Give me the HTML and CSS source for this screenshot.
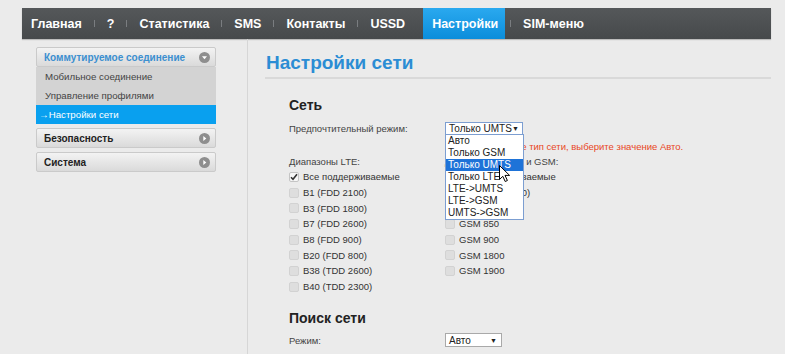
FILE: index.html
```html
<!DOCTYPE html>
<html lang="ru">
<head>
  <meta charset="UTF-8">
  <meta name="viewport" content="width=device-width, initial-scale=1.0">
  <title>Настройки сети</title>
  <link rel="stylesheet" href="styles.css">
</head>
<body>
  <div class="page">
    <!-- Top menu -->
    <nav class="topnav">
      <ul>
        <li><a href="#">Главная</a></li>
        <li><a href="#">?</a></li>
        <li><a href="#">Статистика</a></li>
        <li><a href="#">SMS</a></li>
        <li><a href="#">Контакты</a></li>
        <li><a href="#">USSD</a></li>
        <li class="active"><a href="#">Настройки</a></li>
        <li><a href="#">SIM-меню</a></li>
      </ul>
    </nav>

    <div class="main">
      <!-- Left menu -->
      <aside class="sidebar">
        <div class="menu-group">
          <div class="menu-head open">
            <span>Коммутируемое соединение</span>
            <svg class="toggle" width="11" height="11" viewBox="0 0 11 11"><circle cx="5.5" cy="5.5" r="5.5" fill="#8e8e8e"/><path d="M3 4.2h5L5.5 7.2z" fill="#fff"/></svg>
          </div>
          <ul class="submenu">
            <li><a href="#">Мобильное соединение</a></li>
            <li><a href="#">Управление профилями</a></li>
            <li class="current"><a href="#">&rarr;Настройки сети</a></li>
          </ul>
        </div>
        <div class="menu-group">
          <div class="menu-head">
            <span>Безопасность</span>
            <svg class="toggle" width="11" height="11" viewBox="0 0 11 11"><circle cx="5.5" cy="5.5" r="5.5" fill="#8e8e8e"/><path d="M4.3 3v5l3-2.5z" fill="#fff"/></svg>
          </div>
        </div>
        <div class="menu-group">
          <div class="menu-head">
            <span>Система</span>
            <svg class="toggle" width="11" height="11" viewBox="0 0 11 11"><circle cx="5.5" cy="5.5" r="5.5" fill="#8e8e8e"/><path d="M4.3 3v5l3-2.5z" fill="#fff"/></svg>
          </div>
        </div>
      </aside>

      <!-- Page content -->
      <section class="content">
        <h1>Настройки сети</h1>

        <div class="form-area">
          <h2>Сеть</h2>
          <div class="form-row">
            <span class="label">Предпочтительный режим:</span>
            <div class="select-wrap">
              <div class="select focused">Только UMTS <span class="arrow">&#9660;</span></div>
              <ul class="options">
                <li>Авто</li>
                <li>Только GSM</li>
                <li class="hover">Только UMTS</li>
                <li>Только LTE</li>
                <li>LTE-&gt;UMTS</li>
                <li>LTE-&gt;GSM</li>
                <li>UMTS-&gt;GSM</li>
              </ul>
              <svg class="cursor" width="11" height="17" viewBox="0 0 11 17"><path d="M0.5 0.5v14l3.3-3.2 2.4 5.2 2.2-1-2.4-5.1h4.6z" fill="#fff" stroke="#000" stroke-width="1"/></svg>
            </div>
          </div>
          <div class="hint">Если вы не знаете тип сети, выберите значение Авто.</div>

          <div class="bands">
            <div class="band-col">
              <div class="band-title">Диапазоны LTE:</div>
              <label class="check-row"><span class="box checked"><svg width="8" height="8" viewBox="0 0 8 8"><path d="M1 4.2l2 2L7 1.3" fill="none" stroke="#333" stroke-width="1.6"/></svg></span>Все поддерживаемые</label>
              <label class="check-row"><span class="box"></span>B1 (FDD 2100)</label>
              <label class="check-row"><span class="box"></span>B3 (FDD 1800)</label>
              <label class="check-row"><span class="box"></span>B7 (FDD 2600)</label>
              <label class="check-row"><span class="box"></span>B8 (FDD 900)</label>
              <label class="check-row"><span class="box"></span>B20 (FDD 800)</label>
              <label class="check-row"><span class="box"></span>B38 (TDD 2600)</label>
              <label class="check-row"><span class="box"></span>B40 (TDD 2300)</label>
            </div>
            <div class="band-col">
              <div class="band-title">Диапазоны UMTS и GSM:</div>
              <label class="check-row"><span class="box checked"><svg width="8" height="8" viewBox="0 0 8 8"><path d="M1 4.2l2 2L7 1.3" fill="none" stroke="#333" stroke-width="1.6"/></svg></span>Все поддерживаемые</label>
              <label class="check-row"><span class="box"></span>UMTS (B1 2100)</label>
              <label class="check-row"><span class="box"></span>UMTS 900</label>
              <label class="check-row"><span class="box"></span>GSM 850</label>
              <label class="check-row"><span class="box"></span>GSM 900</label>
              <label class="check-row"><span class="box"></span>GSM 1800</label>
              <label class="check-row"><span class="box"></span>GSM 1900</label>
            </div>
          </div>

          <h2 class="search-title">Поиск сети</h2>
          <div class="form-row">
            <span class="label">Режим:</span>
            <div class="select small">Авто <span class="arrow">&#9660;</span></div>
          </div>
        </div>
      </section>
    </div>
  </div>
</body>
</html>
```

FILE: styles.css
```css
body {
  margin: 0;
  background-color: #ebebeb;
  font-family: "Liberation Sans", Arial, sans-serif;
  color: #333;
}

.page {
  width: 749px;
  margin-left: 22px;
  padding-top: 8px;
}

/* Top menu */
.topnav {
  height: 31px;
  background: linear-gradient(#55585a, #46494b);
  box-shadow: 0 1px 1px rgba(0,0,0,0.2);
}

.topnav ul {
  list-style: none;
  margin: 0;
  padding: 0 0 0 9px;
  display: flex;
  height: 100%;
}

.topnav li {
  display: flex;
  align-items: center;
}

.topnav li + li::before {
  content: "";
  width: 1px;
  height: 7px;
  background-color: #7a7d80;
}

.topnav a {
  display: flex;
  align-items: center;
  height: 100%;
  padding: 0 12px;
  color: #fff;
  font-size: 12.5px;
  font-weight: bold;
  text-decoration: none;
  white-space: nowrap;
}

.topnav li:first-child a {
  padding-left: 0;
}

.topnav li.active {
  margin-right: 5px;
}

.topnav li.active a {
  margin-left: 5px;
  padding: 0 7px 0 9px;
  background: linear-gradient(#2aa9ef, #0b8ddb);
}

.topnav li.active::before {
  background-color: transparent;
}

/* Layout */
.main {
  display: flex;
  min-height: 315px;
}

.sidebar {
  width: 180px;
  padding: 8px 31px 0 14px;
  border-right: 1px solid #d6d6d6;
}

.menu-group {
  margin-bottom: 4px;
}

.menu-head {
  display: flex;
  justify-content: space-between;
  align-items: center;
  height: 18px;
  padding: 0 5px 0 7px;
  border: 1px solid #cacaca;
  border-radius: 2px;
  background: linear-gradient(#f3f3f3, #dadada);
  font-size: 10px;
  font-weight: bold;
  color: #222;
  white-space: nowrap;
}

.menu-head.open {
  color: #3b8fd0;
}

.submenu {
  list-style: none;
  margin: 0;
  padding: 0;
  background-color: #d3d3d3;
}

.submenu li a {
  display: block;
  height: 19px;
  line-height: 19px;
  padding-left: 9px;
  font-size: 9.7px;
  color: #444;
  text-decoration: none;
}

.submenu li.current a {
  padding-left: 3px;
  background-color: #09a0ef;
  color: #fff;
}

/* Content */
.content {
  flex: 1;
}

h1 {
  margin: 12px 0 0 17px;
  padding: 0 0 3px 1px;
  border-bottom: 2px solid #d9d9d9;
  font-size: 19px;
  line-height: 23px;
  color: #2b8dd4;
}

.form-area {
  padding-left: 41px;
  padding-top: 1px;
  font-size: 9.5px;
  color: #444;
}

h2 {
  margin: 17px 0 7px;
  font-size: 14px;
  line-height: 17px;
  color: #222;
}

.form-row {
  display: flex;
  align-items: center;
  height: 15px;
}

.form-row .label {
  width: 156px;
}

.select-wrap {
  position: relative;
}

.select {
  display: flex;
  justify-content: space-between;
  align-items: center;
  box-sizing: border-box;
  width: 78px;
  height: 14px;
  padding: 0 4px 0 3px;
  border: 1px solid #a9a9a9;
  background-color: #fff;
  font-size: 10px;
  color: #222;
  white-space: nowrap;
}

.select.focused {
  border-color: #7c9ed1;
}

.select.small {
  width: 57px;
}

.select .arrow {
  font-size: 7px;
}

.options {
  position: absolute;
  top: 12px;
  left: 0;
  z-index: 2;
  width: 77px;
  margin: 0;
  padding: 0;
  list-style: none;
  border: 1px solid #7c9ed1;
  background-color: #fff;
  color: #222;
  font-size: 10px;
  white-space: nowrap;
}

.options li {
  height: 12px;
  line-height: 12px;
  padding-left: 2px;
}

.options li.hover {
  background-color: #1e73d8;
  color: #fff;
}

.cursor {
  position: absolute;
  top: 43px;
  left: 54px;
  z-index: 3;
}

.hint {
  margin: 3px 0 0 156px;
  line-height: 15px;
  color: #e9461e;
}

.bands {
  display: flex;
}

.band-col {
  width: 156px;
}

.band-title {
  height: 14px;
  line-height: 14px;
  margin-top: 1px;
}

.check-row {
  display: flex;
  align-items: center;
  height: 15.7px;
  font-size: 9.5px;
  color: #333;
}

.box {
  display: flex;
  align-items: center;
  justify-content: center;
  box-sizing: border-box;
  width: 10px;
  height: 10px;
  margin-right: 4px;
  border: 1px solid #d2d2d2;
  border-radius: 2px;
  background-color: #dedede;
}

.box.checked {
  background-color: #f6f6f6;
  border-color: #c4c4c4;
}

h2.search-title {
  margin-top: 15px;
  margin-bottom: 6px;
}
```
